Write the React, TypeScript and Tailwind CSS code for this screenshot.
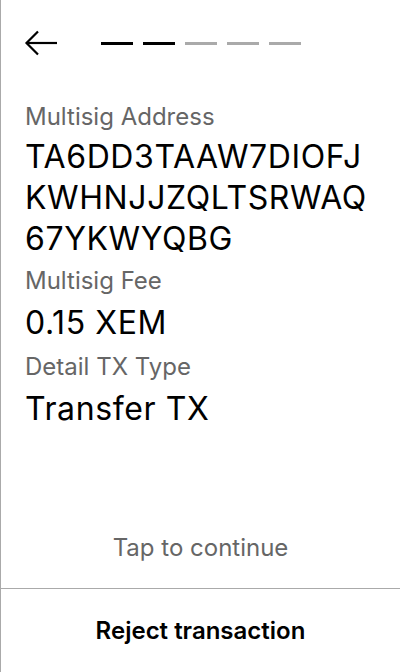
const steps = [true, true, false, false, false];

const fields = [
  { label: "Multisig Address", lines: ["TA6DD3TAAW7DIOFJ", "KWHNJJZQLTSRWAQ", "67YKWYQBG"] },
  { label: "Multisig Fee", lines: ["0.15 XEM"] },
  { label: "Detail TX Type", lines: ["Transfer TX"] },
];

function BackArrow() {
  return (
    <svg width="34" height="28" viewBox="0 0 34 28" fill="none" stroke="black" strokeWidth="2.2">
      <path d="M33 14H2.5" />
      <path d="M14 2.5L2.5 14L14 25.5" />
    </svg>
  );
}

export default function App() {
  return (
    <div
      className="flex h-[672px] w-[400px] flex-col border-l border-[#aaaaaa] bg-white text-black"
      style={{ fontFamily: "Inter, 'Noto Sans', sans-serif" }}
    >
      {/* Header */}
      <div className="flex h-[86px] items-center pl-[23px]">
        <BackArrow />
        <div className="ml-[43px] flex gap-[10px]">
          {steps.map((done, i) => (
            <div
              key={i}
              className={`h-[3px] w-8 ${done ? "bg-black" : "bg-[#aaaaaa]"}`}
            />
          ))}
        </div>
      </div>

      {/* Fields */}
      <div className="flex flex-col gap-[2px] px-6 pt-[11px]">
        {fields.map((f) => (
          <div key={f.label} className="flex flex-col">
            <span className="text-[24px] leading-[39px] text-[#666666]">{f.label}</span>
            {f.lines.map((l) => (
              <span
                key={l}
                className={`text-[32px] tracking-[0.6px] ${f.lines.length > 1 ? "leading-[41px]" : "leading-[45px]"}`}
              >
                {l}
              </span>
            ))}
          </div>
        ))}
      </div>

      <div className="flex-1" />

      <div className="pb-[26px] text-center text-[24px] leading-[29px] text-[#666666]">
        Tap to continue
      </div>

      <button className="h-[84px] border-t border-[#aaaaaa] text-center text-[24px] font-semibold">
        Reject transaction
      </button>
    </div>
  );
}
